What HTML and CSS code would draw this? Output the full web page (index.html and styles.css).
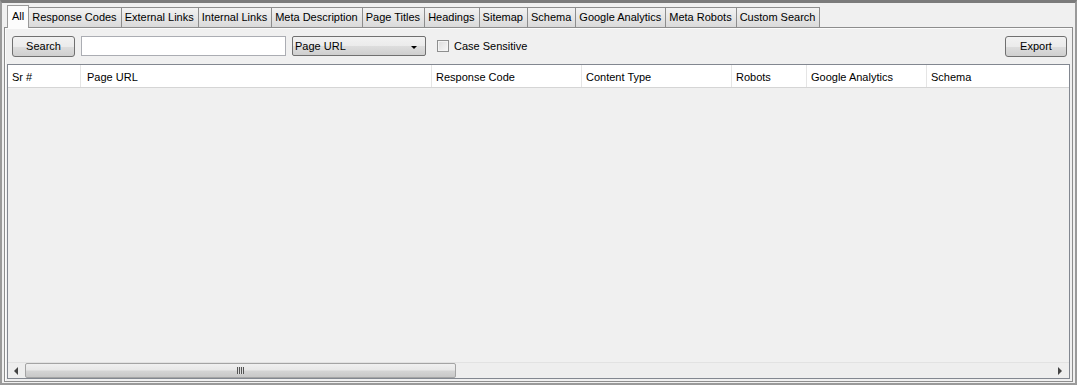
FILE: index.html
```html
<!DOCTYPE html>
<html lang="en">
<head>
  <meta charset="UTF-8" />
  <title>Crawl Results</title>
  <link rel="stylesheet" href="styles.css">
</head>
<body>
  <div class="frame">
    <div class="tabs">
      <div class="tab active">All</div>
      <div class="tab">Response Codes</div>
      <div class="tab">External Links</div>
      <div class="tab">Internal Links</div>
      <div class="tab">Meta Description</div>
      <div class="tab">Page Titles</div>
      <div class="tab">Headings</div>
      <div class="tab">Sitemap</div>
      <div class="tab">Schema</div>
      <div class="tab">Google Analytics</div>
      <div class="tab">Meta Robots</div>
      <div class="tab">Custom Search</div>
    </div>
    <div class="panel">
      <div class="toolbar">
        <button class="btn search">Search</button>
        <input class="field" type="text">
        <div class="select">
          <span>Page URL</span>
          <span class="caret"></span>
        </div>
        <label class="check"><span class="box"></span>Case Sensitive</label>
        <button class="btn export">Export</button>
      </div>
      <div class="table">
        <div class="head">
          <div class="col c1">Sr #</div>
          <div class="col c2">Page URL</div>
          <div class="col c3">Response Code</div>
          <div class="col c4">Content Type</div>
          <div class="col c5">Robots</div>
          <div class="col c6">Google Analytics</div>
          <div class="col c7">Schema</div>
        </div>
        <div class="rows"></div>
        <div class="hscroll">
          <div class="arrow left"></div>
          <div class="track">
            <div class="thumb"><span class="grip"></span></div>
          </div>
          <div class="arrow right"></div>
        </div>
      </div>
    </div>
  </div>
</body>
</html>
```

FILE: styles.css
```css
html, body {
  margin: 0;
  padding: 0;
}

body {
  font-family: "Liberation Sans", Arial, sans-serif;
  font-size: 11px;
  color: #000;
  background-color: #f0f0f0;
  width: 1077px;
  height: 385px;
  overflow: hidden;
}

.frame {
  box-sizing: border-box;
  height: 385px;
  display: flex;
  flex-direction: column;
  border-top: 3px solid #7b7b7b;
  border-left: 2px solid #9a9a9a;
  border-right: 2px solid #9a9a9a;
  border-bottom: 2px solid #9a9a9a;
  padding: 1px 2px 1px 2px;
}

.tabs {
  display: flex;
  align-items: flex-end;
  height: 23px;
  padding-left: 3px;
}

.tab {
  box-sizing: border-box;
  height: 20px;
  padding: 0 4px 0 3px;
  line-height: 19px;
  border: 1px solid #8d8d8d;
  border-bottom: none;
  margin-left: -1px;
  background: linear-gradient(#f2f2f2, #dadada);
  white-space: nowrap;
}

.tab.active {
  height: 23px;
  line-height: 20px;
  padding: 0 4px 0 4px;
  background: #fcfcfc;
  margin-left: 0;
  margin-bottom: -1px;
  position: relative;
  z-index: 1;
  border-color: #9a9a9a;
}

.panel {
  flex: 1;
  display: flex;
  flex-direction: column;
  border: 1px solid #8d8d8d;
  background-color: #f0f0f0;
  box-shadow: inset 1px 1px 0 #fcfcfc;
  padding: 8px 2px 2px 2px;
}

.toolbar {
  display: flex;
  align-items: center;
  height: 20px;
  padding-left: 5px;
  margin-bottom: 8px;
}

.btn {
  box-sizing: border-box;
  height: 21px;
  font-family: inherit;
  font-size: 11px;
  border: 1px solid #707070;
  border-radius: 3px;
  background: linear-gradient(#f2f2f2 0%, #ebebeb 50%, #dddddd 51%, #cfcfcf 100%);
  padding: 0;
}

.search {
  width: 63px;
}

.export {
  width: 62px;
  margin-left: auto;
  margin-right: 3px;
}

.field {
  box-sizing: border-box;
  width: 205px;
  height: 20px;
  margin-left: 6px;
  border: 1px solid #abadb3;
  background: #fff;
  padding: 0;
}

.select {
  box-sizing: border-box;
  width: 134px;
  height: 20px;
  margin-left: 6px;
  border: 1px solid #707070;
  border-radius: 2px;
  background: linear-gradient(#f2f2f2 0%, #ebebeb 50%, #dddddd 51%, #cfcfcf 100%);
  display: flex;
  align-items: center;
  padding: 0 8px 0 2px;
}

.select span:first-child {
  flex: 1;
}

.caret {
  width: 0;
  height: 0;
  border-left: 3px solid transparent;
  border-right: 3px solid transparent;
  border-top: 3px solid #000;
  margin-top: 3px;
}

.check {
  display: flex;
  align-items: center;
  margin-left: 11px;
}

.box {
  box-sizing: border-box;
  width: 12px;
  height: 12px;
  border: 1px solid #8e8f8f;
  background: linear-gradient(135deg, #dcdcdc, #f8f8f8);
  box-shadow: inset 0 0 0 1px #f4f4f4;
  margin-right: 5px;
}

.table {
  flex: 1;
  display: flex;
  flex-direction: column;
  border: 1px solid #828790;
  background-color: #f0f0f0;
}

.head {
  display: flex;
  height: 22px;
  background: #fff;
  border-bottom: 1px solid #d5d5d5;
}

.col {
  box-sizing: border-box;
  line-height: 24px;
  padding-left: 4px;
  border-right: 1px solid #e5e5e5;
  white-space: nowrap;
}

.c1 { width: 73px; }
.c2 { width: 351px; padding-left: 6px; }
.c3 { width: 150px; }
.c4 { width: 150px; }
.c5 { width: 75px; }
.c6 { width: 120px; }
.c7 { flex: 1; border-right: none; }

.rows {
  flex: 1;
}

.hscroll {
  display: flex;
  height: 15px;
  background: #eeeeee;
  border-top: 1px solid #e2e2e2;
}

.arrow {
  width: 17px;
  position: relative;
}

.arrow.left::after,
.arrow.right::after {
  content: "";
  position: absolute;
  top: 4px;
  border-top: 4px solid transparent;
  border-bottom: 4px solid transparent;
}

.arrow.left::after {
  left: 6px;
  border-right: 4px solid #444;
}

.arrow.right::after {
  left: 6px;
  border-left: 4px solid #444;
}

.track {
  flex: 1;
  display: flex;
}

.thumb {
  box-sizing: border-box;
  width: 431px;
  height: 15px;
  border: 1px solid #a4a4a4;
  border-radius: 2px;
  background: linear-gradient(#f0f0f0 0%, #e8e8e8 45%, #d4d4d4 55%, #c8c8c8 100%);
  display: flex;
  align-items: center;
  justify-content: center;
}

.grip {
  width: 7px;
  height: 7px;
  background: repeating-linear-gradient(90deg, #555 0 1px, #ddd 1px 2px);
}
```
